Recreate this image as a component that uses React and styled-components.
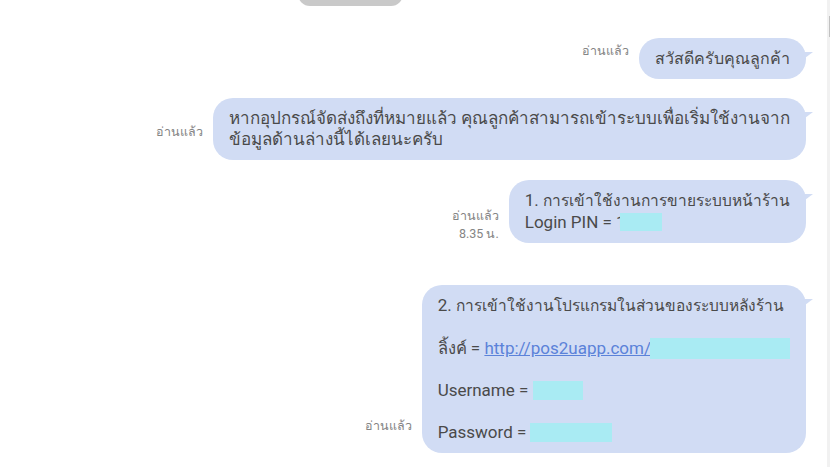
import React from "react";
import styled, { createGlobalStyle } from "styled-components";

const Global = createGlobalStyle`
  html, body { margin: 0; padding: 0; background: #ffffff; overflow: hidden; }
  body { font-family: Roboto, "Noto Sans", sans-serif; }
`;

const Screen = styled.div`
  display: flex;
  width: 830px;
  height: 467px;
  overflow: hidden;
  background: #ffffff;
`;

const Chat = styled.div`
  flex: 1;
  display: flex;
  flex-direction: column;
  padding-right: 21px;
`;

const DateRow = styled.div`
  display: flex;
  padding-left: 298px;
`;

const DatePill = styled.div`
  width: 105px;
  height: 24px;
  margin-top: -18px;
  border-radius: 12px;
  background: #c9c9c9;
`;

const Row = styled.div`
  display: flex;
  justify-content: flex-end;
  align-items: flex-end;
  gap: 10px;
  margin-top: ${(p) => p.$top}px;
`;

const Receipt = styled.div`
  font-family: Roboto, "Noto Sans", sans-serif;
  font-size: 12.5px;
  line-height: 18px;
  color: #858585;
  text-align: right;
  margin-bottom: ${(p) => p.$bottom}px;
`;

const Bubble = styled.div`
  position: relative;
  background: #d1dcf4;
  color: #4a4a4a;
  border-radius: 20px;
  padding: 10px 16px;
  font-size: 17px;
  line-height: 21px;
  display: flex;
  flex-direction: column;
  gap: ${(p) => p.$gap || 0}px;
  &::after {
    content: "";
    position: absolute;
    right: -7px;
    top: 14px;
    border-top: 6px solid #d1dcf4;
    border-right: 8px solid transparent;
  }
`;

const Line = styled.div`
  white-space: nowrap;
`;

const Th = styled.span`
  font-size: ${(p) => p.$size || 16}px;
`;

const Link = styled.a`
  color: #5b82d9;
  text-decoration: underline;
`;

const Redact = styled.span`
  display: inline-block;
  vertical-align: middle;
  width: ${(p) => p.$w}px;
  height: ${(p) => p.$h || 19}px;
  background: #a9ebf3;
  margin-top: -3px;
  margin-left: ${(p) => p.$overlap || 0}px;
`;

const ScrollTrack = styled.div`
  width: 3px;
  background: #f1f1f1;
  display: flex;
  justify-content: flex-end;
  padding-top: 16px;
`;

const ScrollThumb = styled.div`
  width: 1px;
  height: 21px;
  background: #c1c1c1;
`;

export default function App() {
  return (
    <>
      <Global />
      <Screen>
        <Chat>
          <DateRow>
            <DatePill />
          </DateRow>
          <Row $top={32}>
            <Receipt $bottom={19}>อ่านแล้ว</Receipt>
            <Bubble>
              <Line>
                <Th $size={16}>สวัสดีครับคุณลูกค้า</Th>
              </Line>
            </Bubble>
          </Row>
          <Row $top={19}>
            <Receipt $bottom={19}>อ่านแล้ว</Receipt>
            <Bubble>
              <Line>
                <Th $size={17}>หากอุปกรณ์จัดส่งถึงที่หมายแล้ว คุณลูกค้าสามารถเข้าระบบเพื่อเริ่มใช้งานจาก</Th>
              </Line>
              <Line>
                <Th $size={17}>ข้อมูลด้านล่างนี้ได้เลยนะครับ</Th>
              </Line>
            </Bubble>
          </Row>
          <Row $top={20}>
            <Receipt $bottom={0}>
              อ่านแล้ว
              <br />
              8.35 น.
            </Receipt>
            <Bubble>
              <Line>
                1. <Th $size={15.5}>การเข้าใช้งานการขายระบบหน้าร้าน</Th>
              </Line>
              <Line>
                Login PIN = 1<Redact $w={42} $h={18} $overlap={-6} />
              </Line>
            </Bubble>
          </Row>
          <Row $top={42}>
            <Receipt $bottom={18}>อ่านแล้ว</Receipt>
            <Bubble $gap={21}>
              <Line>
                2. <Th $size={15.5}>การเข้าใช้งานโปรแกรมในส่วนของระบบหลังร้าน</Th>
              </Line>
              <Line>
                <Th $size={16.5}>ลิ้งค์</Th> = <Link href="#">http://pos2uapp.com/</Link>
                <Redact $w={140} $h={21} $overlap={-1} />
              </Line>
              <Line>
                Username = <Redact $w={50} />
              </Line>
              <Line>
                Password = <Redact $w={82} />
              </Line>
            </Bubble>
          </Row>
        </Chat>
        <ScrollTrack>
          <ScrollThumb />
        </ScrollTrack>
      </Screen>
    </>
  );
}
